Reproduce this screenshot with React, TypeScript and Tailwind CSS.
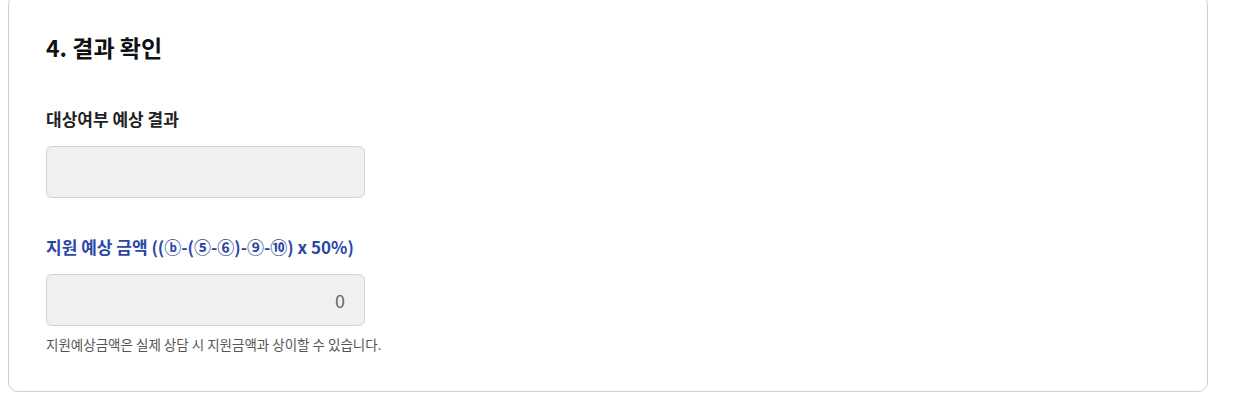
export default function App() {
  return (
    <div
      className="w-[1245px] h-[409px] overflow-hidden bg-white pl-2"
      style={{ fontFamily: '"Noto Sans CJK KR", "Noto Sans", sans-serif' }}
    >
      <section className="-mt-[6px] w-[1200px] rounded-[10px] border border-[#cfcfcf] pl-[37px] pt-[36px] pb-[38px]">
        <h2 className="text-[23px] leading-[32px] font-bold text-[#111]">4. 결과 확인</h2>

        <div className="mt-[44px]">
          <label className="block text-[17px] leading-[24px] font-bold text-[#222]">대상여부 예상 결과</label>
          <input
            readOnly
            className="mt-[15px] block h-[52px] w-[319px] rounded-[6px] border border-[#d4d4d4] bg-[#f0f0f0] px-4 text-right text-[18px] text-[#666] outline-none"
          />
        </div>

        <div className="mt-[37px]">
          <label className="block text-[17px] leading-[24px] font-bold text-[#2a47a6]">
            지원 예상 금액 ((ⓑ-(⑤-⑥)-⑨-⑩) x 50%)
          </label>
          <input
            readOnly
            value="0"
            className="mt-[15px] block h-[52px] w-[319px] rounded-[6px] border border-[#d4d4d4] bg-[#f0f0f0] pr-[19px] pl-4 text-right text-[18px] text-[#666] outline-none"
          />
          <p className="mt-[9px] text-[13.5px] leading-[18px] text-[#555]">
            지원예상금액은 실제 상담 시 지원금액과 상이할 수 있습니다.
          </p>
        </div>
      </section>
    </div>
  )
}
